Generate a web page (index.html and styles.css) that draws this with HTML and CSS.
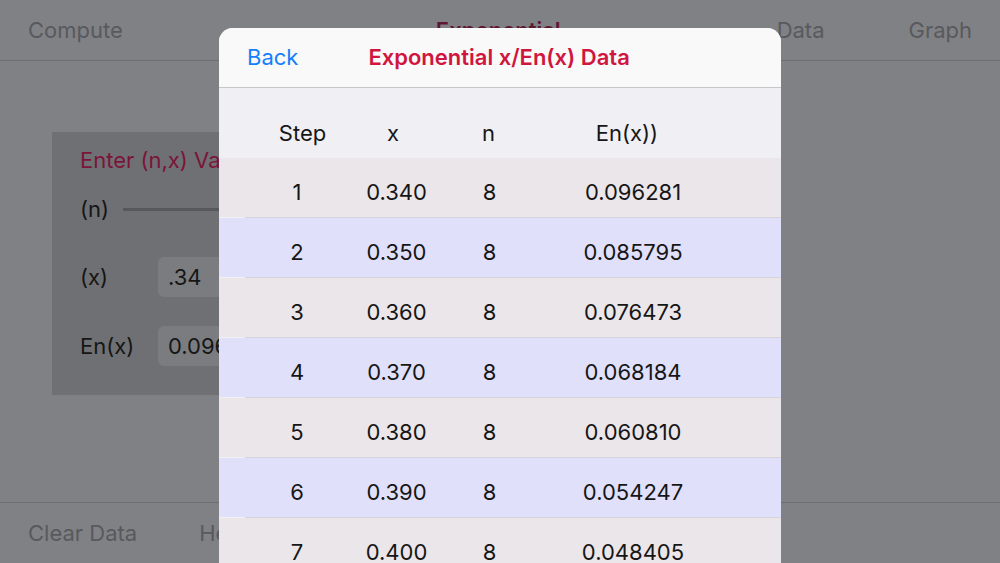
FILE: index.html
```html
<!DOCTYPE html>
<html lang="en">
<head>
<meta charset="utf-8">
<title>Exponential x/En(x) Data</title>
<link rel="stylesheet" href="styles.css">
</head>
<body>
<div class="app">
  <header class="topbar">
    <span class="tab">Compute</span>
    <span class="apptitle">Exponential</span>
    <span class="tab tab-data">Data</span>
    <span class="tab tab-graph">Graph</span>
  </header>
  <main class="main">
    <section class="panel">
      <div class="panel-title">Enter (n,x) Values</div>
      <div class="prow prow-n">
        <span class="plabel">(n)</span>
        <span class="slider"></span>
      </div>
      <div class="prow prow-x">
        <span class="plabel">(x)</span>
        <span class="pbox">.34</span>
      </div>
      <div class="prow prow-e">
        <span class="plabel">En(x)</span>
        <span class="pbox">0.096281</span>
      </div>
    </section>
  </main>
  <footer class="bottombar">
    <span class="tab">Clear Data</span>
    <span class="tab tab-help">Help</span>
  </footer>
</div>

<div class="modal">
  <div class="modal-head">
    <span class="back">Back</span>
    <span class="modal-title">Exponential x/En(x) Data</span>
  </div>
  <div class="thead">
    <span>Step</span><span>x</span><span>n</span><span>En(x))</span>
  </div>
  <div class="trow odd"><span>1</span><span>0.340</span><span>8</span><span>0.096281</span></div>
  <div class="trow even"><span>2</span><span>0.350</span><span>8</span><span>0.085795</span></div>
  <div class="trow odd"><span>3</span><span>0.360</span><span>8</span><span>0.076473</span></div>
  <div class="trow even"><span>4</span><span>0.370</span><span>8</span><span>0.068184</span></div>
  <div class="trow odd"><span>5</span><span>0.380</span><span>8</span><span>0.060810</span></div>
  <div class="trow even"><span>6</span><span>0.390</span><span>8</span><span>0.054247</span></div>
  <div class="trow odd"><span>7</span><span>0.400</span><span>8</span><span>0.048405</span></div>
</div>
</body>
</html>
```

FILE: styles.css
```css
* { box-sizing: border-box; }
html, body {
  margin: 0;
  padding: 0;
  width: 1000px;
  height: 563px;
  overflow: hidden;
}
body {
  background: #808185;
  font-family: "Inter", "Liberation Sans", sans-serif;
  font-size: 22px;
  color: #161616;
  position: relative;
}
.app {
  display: flex;
  flex-direction: column;
  height: 563px;
}
.topbar {
  height: 61px;
  border-bottom: 1px solid #6d6e72;
  display: flex;
  align-items: center;
  padding: 0 0 0 28px;
  line-height: 24px;
  padding-bottom: 1px;
}
.tab {
  color: #58595d;
}
.apptitle {
  color: #5e1832;
  font-weight: 600;
  margin-left: 313px;
}
.tab-data { margin-left: 216px; }
.tab-graph { margin-left: 84px; }

.main {
  flex: 1;
  padding: 71px 0 0 52px;
}
.panel {
  width: 600px;
  height: 263px;
  background: #6f7074;
  padding: 16px 0 0 28px;
  line-height: 24px;
}
.panel-title {
  color: #7b1538;
}
.prow {
  display: flex;
  align-items: center;
}
.prow-n { margin-top: 25px; }
.prow-x { margin-top: 36px; height: 40px; }
.prow-e { margin-top: 29px; height: 40px; }
.plabel {
  width: 78px;
  flex: none;
}
.prow-n .plabel { width: 43px; }
.slider {
  flex: 1;
  height: 3px;
  background: #57585c;
}
.pbox {
  height: 40px;
  width: 200px;
  background: #7b7c80;
  border-radius: 6px;
  padding: 8px 10px;
  color: #161616;
}

.bottombar {
  height: 61px;
  border-top: 1px solid #6d6e72;
  display: flex;
  align-items: center;
  padding-left: 28px;
  line-height: 24px;
}
.tab-help { margin-left: 62px; }

.modal {
  position: absolute;
  left: 219px;
  top: 28px;
  width: 562px;
  height: 560px;
  background: #ebe6ea;
  border-radius: 14px 14px 0 0;
  overflow: hidden;
}
.modal-head {
  height: 60px;
  background: #f9f9f9;
  border-bottom: 1px solid #c8c7cc;
  display: flex;
  align-items: center;
  line-height: 24px;
  padding: 0 0 1px 28px;
}
.back {
  color: #157efb;
}
.modal-title {
  color: #d0163e;
  font-weight: 600;
  margin-left: 70px;
}
.thead {
  height: 70px;
  background: #efeff4;
  display: grid;
  grid-template-columns: 44px 79px 102px 89px 188px;
  line-height: 24px;
  padding-top: 33px;
  color: #161616;
}
.thead span, .trow span { text-align: center; }
.thead span:first-child { grid-column: 2; }
.trow {
  height: 60px;
  display: grid;
  grid-template-columns: 38px 80px 119px 67px 220px;
  line-height: 24px;
  padding-top: 22px;
  color: #161616;
}
.trow span:first-child { grid-column: 2; }
.trow.odd {
  background: linear-gradient(to right, #f2f0f3 26px, #d6d3db 26px) left bottom / 100% 1px no-repeat, #ebe6ea;
}
.trow.even {
  background: linear-gradient(to right, #f2f0f3 26px, #d6d3db 26px) left bottom / 100% 1px no-repeat, #e0e0fa;
}
```
